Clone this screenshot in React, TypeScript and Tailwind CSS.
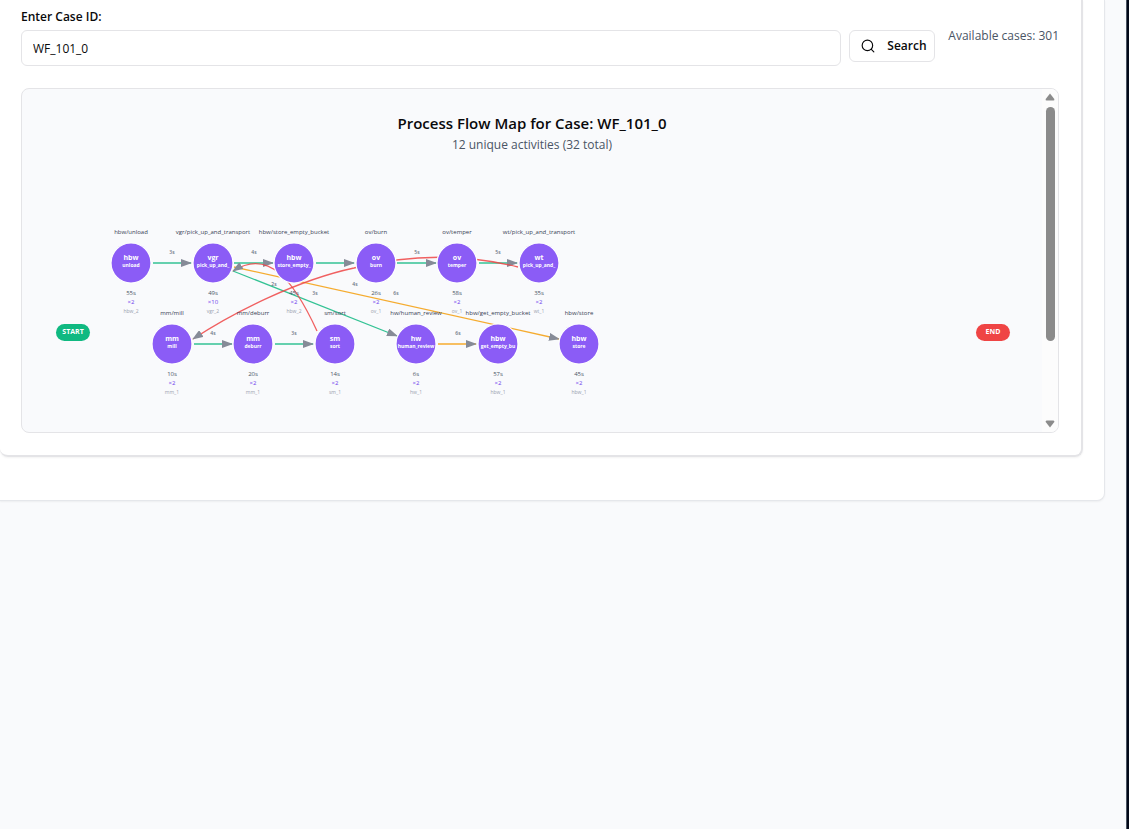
type Node = {
  x: number
  y: number
  label: string
  head: string
  sub: string
  time: string
  count: string
  station: string
}

const nodes: Node[] = [
  { x: 109, y: 174, label: 'hbw/unload', head: 'hbw', sub: 'unload', time: '55s', count: '×2', station: 'hbw_2' },
  { x: 191, y: 174, label: 'vgr/pick_up_and_transport', head: 'vgr', sub: 'pick_up_and_', time: '49s', count: '×10', station: 'vgr_2' },
  { x: 272, y: 174, label: 'hbw/store_empty_bucket', head: 'hbw', sub: 'store_empty_', time: '45s', count: '×2', station: 'hbw_2' },
  { x: 354, y: 174, label: 'ov/burn', head: 'ov', sub: 'burn', time: '26s', count: '×2', station: 'ov_1' },
  { x: 435, y: 174, label: 'ov/temper', head: 'ov', sub: 'temper', time: '58s', count: '×2', station: 'ov_1' },
  { x: 517, y: 174, label: 'wt/pick_up_and_transport', head: 'wt', sub: 'pick_up_and_', time: '35s', count: '×2', station: 'wt_1' },
  { x: 150, y: 255, label: 'mm/mill', head: 'mm', sub: 'mill', time: '10s', count: '×2', station: 'mm_1' },
  { x: 231, y: 255, label: 'mm/deburr', head: 'mm', sub: 'deburr', time: '20s', count: '×2', station: 'mm_1' },
  { x: 313, y: 255, label: 'sm/sort', head: 'sm', sub: 'sort', time: '14s', count: '×2', station: 'sm_1' },
  { x: 394, y: 255, label: 'hw/human_review', head: 'hw', sub: 'human_review', time: '6s', count: '×2', station: 'hw_1' },
  { x: 476, y: 255, label: 'hbw/get_empty_bucket', head: 'hbw', sub: 'get_empty_bu', time: '57s', count: '×2', station: 'hbw_1' },
  { x: 557, y: 255, label: 'hbw/store', head: 'hbw', sub: 'store', time: '45s', count: '×2', station: 'hbw_1' },
]

const GREEN = '#10b981'
const AMBER = '#f59e0b'
const RED = '#ef4444'

const edges = [
  { d: 'M131 174H169', color: GREEN, arrow: true },
  { d: 'M212 174H251', color: GREEN, arrow: true },
  { d: 'M294 174H332', color: GREEN, arrow: true },
  { d: 'M375 174H414', color: GREEN, arrow: true },
  { d: 'M457 174H495', color: GREEN, arrow: true },
  { d: 'M172 255H210', color: GREEN, arrow: true },
  { d: 'M253 255H291', color: GREEN, arrow: true },
  { d: 'M416 255H454', color: AMBER, arrow: true },
  { d: 'M211 182L375 247', color: GREEN, arrow: true },
  { d: 'M212 178L537 250', color: AMBER, arrow: true },
  { d: 'M496 178Q416 158 332 179C276 191 212 223 171 250', color: RED, arrow: true },
  { d: 'M295 242C272 192 247 159 211 182', color: RED, arrow: true },
]

const edgeLabels = [
  { x: 150, y: 165, text: '3s' },
  { x: 232, y: 165, text: '4s' },
  { x: 395, y: 165, text: '5s' },
  { x: 476, y: 165, text: '5s' },
  { x: 252, y: 197, text: '2s' },
  { x: 333, y: 197, text: '4s' },
  { x: 293, y: 206, text: '3s' },
  { x: 374, y: 206, text: '6s' },
  { x: 191, y: 246, text: '4s' },
  { x: 272, y: 246, text: '3s' },
  { x: 436, y: 246, text: '6s' },
]

function FlowMap() {
  return (
    <svg
      className="absolute left-0 top-0"
      width="600"
      height="320"
      textAnchor="middle"
      role="img"
      aria-label="Process flow map"
    >
      <defs>
        <marker id="arrow" markerUnits="userSpaceOnUse" markerWidth="11" markerHeight="8" refX="10" refY="4" orient="auto">
          <path d="M0 0L11 4L0 8Z" fill="#868b97" />
        </marker>
      </defs>
      {edges.map((e) => (
        <path key={e.d} d={e.d} fill="none" stroke={e.color} strokeWidth="1.3" strokeOpacity="0.85" markerEnd={e.arrow ? 'url(#arrow)' : undefined} />
      ))}
      {edgeLabels.map((l) => (
        <text key={`${l.x}-${l.y}`} x={l.x} y={l.y} className="fill-gray-500 text-[5px] font-semibold">
          {l.text}
        </text>
      ))}
      {nodes.map((n) => (
        <g key={n.label}>
          <circle cx={n.x} cy={n.y} r="20" fill="#8b5cf6" stroke="#ffffff" strokeWidth="1.2" />
          <text x={n.x} y={n.y - 3} className="fill-white text-[7px] font-bold">{n.head}</text>
          <text x={n.x} y={n.y + 4} className="fill-white text-[5px] font-bold">{n.sub}</text>
          <text x={n.x} y={n.y - 29} className="fill-gray-700 text-[6px] font-medium">{n.label}</text>
          <text x={n.x} y={n.y + 32} className="fill-gray-600 text-[6px] font-medium">{n.time}</text>
          <text x={n.x} y={n.y + 41} className="fill-[#6d40ed] text-[6px] font-medium">{n.count}</text>
          <text x={n.x} y={n.y + 50} className="fill-gray-400 text-[5px] font-medium">{n.station}</text>
        </g>
      ))}
    </svg>
  )
}

function ScrollBar() {
  return (
    <div className="flex w-4 shrink-0 flex-col items-center bg-[#fcfcfc] py-1" aria-hidden="true">
      <svg width="10" height="8" viewBox="0 0 10 8" className="shrink-0">
        <path d="M5 0.5L9.3 6Q9.8 7.5 8.3 7.5H1.7Q0.2 7.5 0.7 6Z" fill="#8b8b8b" />
      </svg>
      <div className="mt-[6px] min-h-0 w-[9px] flex-[234] rounded-full bg-[#8b8b8b]" />
      <div className="flex-[79]" />
      <svg width="10" height="8" viewBox="0 0 10 8" className="shrink-0">
        <path d="M5 7.5L9.3 2Q9.8 0.5 8.3 0.5H1.7Q0.2 0.5 0.7 2Z" fill="#8b8b8b" />
      </svg>
    </div>
  )
}

export default function App() {
  return (
    <div className="flex min-h-screen bg-[#f9fafc] font-['Open_Sans','Noto_Sans',sans-serif] text-[#09090b]">
      <main className="min-w-0 flex-1 pr-[21px]">
        <section className="rounded-br-lg border-r border-b border-gray-200 bg-white pr-[21px] pb-[43px] shadow-xs">
          <div className="rounded-b-lg border-r-2 border-b-2 border-[#e4e4e7] pr-[22px] pb-[22px] pl-[21px] shadow-xs">
            <form className="flex items-start" onSubmit={(e) => e.preventDefault()}>
              <div className="flex-1 pt-2">
                <label htmlFor="case-id" className="block text-[12px] leading-[18px] font-semibold">
                  Enter Case ID:
                </label>
                <input
                  id="case-id"
                  defaultValue="WF_101_0"
                  className="mt-1 block h-9 w-full rounded-md border border-[#e4e4e7] px-[11px] text-[12px] outline-none"
                />
              </div>
              <button type="submit" className="mt-[30px] ml-2 flex h-8 w-[86px] items-center gap-3 rounded-md border border-[#e4e4e7] bg-white pl-[11px] text-[12px] font-semibold">
                <svg width="14" height="14" viewBox="0 0 24 24" fill="none" stroke="currentColor" strokeWidth="2" strokeLinecap="round" strokeLinejoin="round" className="shrink-0">
                  <circle cx="11" cy="11" r="9" />
                  <path d="m22 22-4.3-4.3" />
                </svg>
                Search
              </button>
              <p className="mt-[26px] ml-[13px] text-[12px] leading-5 whitespace-nowrap text-gray-600">Available cases: 301</p>
            </form>

            <div className="mt-[22px] flex h-[345px] overflow-hidden rounded-lg border border-[#e4e4e7] bg-[#f9fafc]">
              <div className="relative min-w-0 flex-1">
                <header className="pt-6 text-center">
                  <h2 className="text-[15px] leading-5 font-semibold">Process Flow Map for Case: WF_101_0</h2>
                  <p className="mt-0.5 text-[12px] leading-5 text-gray-600">12 unique activities (32 total)</p>
                </header>
                <FlowMap />
                <span className="absolute top-[235px] left-[34px] flex h-[17px] w-[34px] items-center justify-center rounded-full bg-[#10b981] text-[7px] font-bold text-white">
                  START
                </span>
                <span className="absolute top-[235px] right-[32px] flex h-[17px] w-[34px] items-center justify-center rounded-full bg-[#ef4444] text-[7px] font-bold text-white">
                  END
                </span>
              </div>
              <ScrollBar />
            </div>
          </div>
        </section>
      </main>
      <div className="w-[3px] shrink-0 border-l border-[#4b5563] bg-[#020817]" />
    </div>
  )
}
